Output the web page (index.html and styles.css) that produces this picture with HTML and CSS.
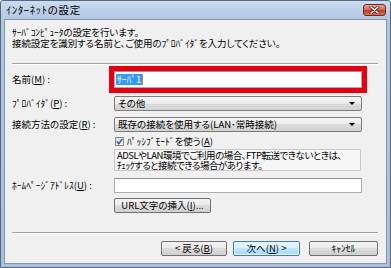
FILE: index.html
```html
<!DOCTYPE html>
<html lang="ja">
<head>
<meta charset="utf-8">
<title>ｲﾝﾀｰﾈｯﾄの設定</title>
<link rel="stylesheet" href="styles.css">
</head>
<body>
<div class="window">
  <div class="titlebar">
    <span class="title">ｲﾝﾀｰﾈｯﾄの設定</span>
    <span class="close">
      <svg width="11" height="8" viewBox="0 0 11 8"><path d="M2 1 L9 7 M9 1 L2 7" stroke="#5a1a12" stroke-width="3" stroke-linecap="round"/><path d="M2 1 L9 7 M9 1 L2 7" stroke="#ffffff" stroke-width="1.6" stroke-linecap="round"/></svg>
    </span>
  </div>
  <div class="client">
    <div class="intro">
      <div>ｻｰﾊﾞｺﾝﾋﾟｭｰﾀの設定を行います。</div>
      <div>接続設定を識別する名前と、ご使用のﾌﾟﾛﾊﾞｲﾀﾞを入力してください。</div>
    </div>
    <div class="sep sep-top"></div>

    <div class="row row-name">
      <span class="lbl">名前(<u>M</u>) :</span>
      <div class="ctrl field field-name"><span class="sel">ｻｰﾊﾞ1</span><span class="caret"></span></div>
    </div>

    <div class="row row-provider">
      <span class="lbl">ﾌﾟﾛﾊﾞｲﾀﾞ(<u>P</u>) :</span>
      <div class="ctrl combo"><span class="combo-text">その他</span><span class="arrow"></span></div>
    </div>

    <div class="row row-conn">
      <span class="lbl">接続方法の設定(<u>R</u>) :</span>
      <div class="ctrl combo"><span class="combo-text">既存の接続を使用する(LAN･常時接続)</span><span class="arrow"></span></div>
    </div>

    <div class="row row-check">
      <span class="lbl"></span>
      <span class="checkbox">
        <svg width="7" height="7" viewBox="0 0 7 7"><path d="M0.8 3.6 L2.8 5.8 L6.3 0.9" fill="none" stroke="#2a55b8" stroke-width="1.5"/></svg>
      </span>
      <span class="check-text">ﾊﾟｯｼﾌﾞﾓｰﾄﾞを使う(<u>A</u>)</span>
    </div>

    <div class="info">
      <div>ADSLやLAN環境でご利用の場合、FTP転送できないときは、</div>
      <div>ﾁｪｯｸすると接続できる場合があります。</div>
    </div>

    <div class="row row-home">
      <span class="lbl">ﾎｰﾑﾍﾟｰｼﾞｱﾄﾞﾚｽ(<u>U</u>) :</span>
      <div class="ctrl field"></div>
    </div>

    <div class="url-row">
      <span class="btn btn-url">URL文字の挿入(<u>I</u>)...</span>
    </div>

    <div class="sep sep-bottom"></div>

    <div class="buttons">
      <span class="btn btn-back">&lt; 戻る(<u>B</u>)</span>
      <span class="btn btn-next">次へ(<u>N</u>) &gt;</span>
      <span class="btn btn-cancel">ｷｬﾝｾﾙ</span>
    </div>
  </div>
</div>
</body>
</html>
```

FILE: styles.css
```css
html, body {
  margin: 0;
  padding: 0;
}

body {
  width: 391px;
  height: 268px;
  overflow: hidden;
  font-family: "Noto Sans CJK JP", "Noto Sans", sans-serif;
  font-size: 9.5px;
  font-feature-settings: "palt";
  color: #000;
  background: #ffffff;
}

u {
  text-decoration: underline;
  text-underline-offset: 1px;
}

.window {
  box-sizing: border-box;
  width: 391px;
  height: 268px;
  border: 1px solid #56677f;
  border-radius: 3px 3px 0 0;
  background: linear-gradient(#cddcef, #bacde7 12px, #b1c6e2 19px, #aabfdc);
  display: flex;
  flex-direction: column;
}

.titlebar {
  flex: none;
  height: 18px;
  display: flex;
  align-items: center;
  padding-left: 5px;
}

.title {
  font-size: 10.5px;
  letter-spacing: 0.7px;
  line-height: 12px;
  color: #000;
}

.close {
  margin-left: auto;
  margin-right: 4px;
  box-sizing: border-box;
  width: 23px;
  height: 12px;
  border: 1px solid #6e2b22;
  border-radius: 3px;
  background: linear-gradient(#e9a797, #d66a52 45%, #c43b22 55%, #d9735a);
  display: flex;
  align-items: center;
  justify-content: center;
}

.close svg {
  display: block;
}

.client {
  flex: 1;
  margin: 0 3px 3px 3px;
  border: 1px solid #8396b2;
  background: #f0f0f0;
  padding: 7px 8px 0 7px;
  display: flex;
  flex-direction: column;
}

.intro {
  line-height: 11px;
  white-space: nowrap;
  letter-spacing: -0.1px;
}

.sep {
  height: 0;
  border-top: 1px solid #a3a3a3;
  border-bottom: 1px solid #ffffff;
}

.sep-top {
  margin-top: 14px;
}

.row {
  display: flex;
  align-items: center;
}

.lbl {
  flex: none;
  width: 102px;
  line-height: 11px;
  white-space: nowrap;
}

.ctrl {
  box-sizing: border-box;
  width: 248px;
}

.field {
  height: 15px;
  background: #ffffff;
  border: 1px solid #abadb3;
  border-top-color: #8e9196;
  display: flex;
  align-items: center;
  padding-left: 1px;
}

.row-name {
  margin-top: 6px;
}

.field-name {
  height: 17px;
  outline: 5px solid #e60012;
  outline-offset: 0;
}

.sel {
  background: #3399ff;
  color: #ffffff;
  line-height: 11px;
  padding: 0 1px;
}

.caret {
  width: 1px;
  height: 11px;
  background: #e07a2a;
}

.row-provider {
  margin-top: 8px;
}

.row-conn {
  margin-top: 6px;
}

.combo {
  height: 15px;
  border: 1px solid #7c7c7c;
  border-radius: 2px;
  background: linear-gradient(#f4f4f4, #ebebeb 50%, #dcdcdc 50%, #d2d2d2);
  display: flex;
  align-items: center;
  padding: 0 6px 0 3px;
  white-space: nowrap;
}

.combo-text {
  line-height: 11px;
}

.arrow {
  margin-left: auto;
  width: 0;
  height: 0;
  border-left: 3px solid transparent;
  border-right: 3px solid transparent;
  border-top: 3px solid #000;
}

.row-check {
  margin-top: 4px;
  height: 10px;
}

.checkbox {
  box-sizing: border-box;
  width: 9px;
  height: 9px;
  margin-left: 1px;
  border: 1px solid #8a8a8a;
  background: linear-gradient(135deg, #dcdcdc, #ffffff);
  display: flex;
  align-items: center;
  justify-content: center;
}

.checkbox svg {
  display: block;
}

.check-text {
  margin-left: 3px;
  line-height: 11px;
  white-space: nowrap;
}

.info {
  box-sizing: border-box;
  margin-top: 3px;
  margin-left: 102px;
  width: 247px;
  height: 22px;
  border: 1px solid #c9c9c9;
  background: #f6f6f6;
  padding: 0 0 0 2px;
  line-height: 10px;
  letter-spacing: -0.5px;
  white-space: nowrap;
  overflow: hidden;
}

.row-home {
  margin-top: 7px;
}

.url-row {
  margin-top: 5px;
  padding-left: 102px;
  display: flex;
}

.btn {
  box-sizing: border-box;
  height: 15px;
  border: 1px solid #707070;
  border-radius: 2px;
  background: linear-gradient(#f3f3f3, #ebebeb 50%, #dddddd 50%, #cfcfcf);
  display: flex;
  align-items: center;
  justify-content: center;
  line-height: 11px;
  white-space: nowrap;
}

.btn-url {
  width: 97px;
}

.sep-bottom {
  margin-top: 19px;
}

.buttons {
  margin-top: 7px;
  display: flex;
  justify-content: flex-end;
}

.btn-back {
  width: 66px;
  margin-right: 6px;
}

.btn-next {
  width: 67px;
  margin-right: 9px;
  border-color: #3c7fb1;
  background: linear-gradient(#eaf6fd, #d9f0fc 50%, #bee6fd 50%, #a7d9f5);
  box-shadow: inset 0 0 0 1px #e6f4fc;
}

.btn-cancel {
  width: 69px;
}
```
